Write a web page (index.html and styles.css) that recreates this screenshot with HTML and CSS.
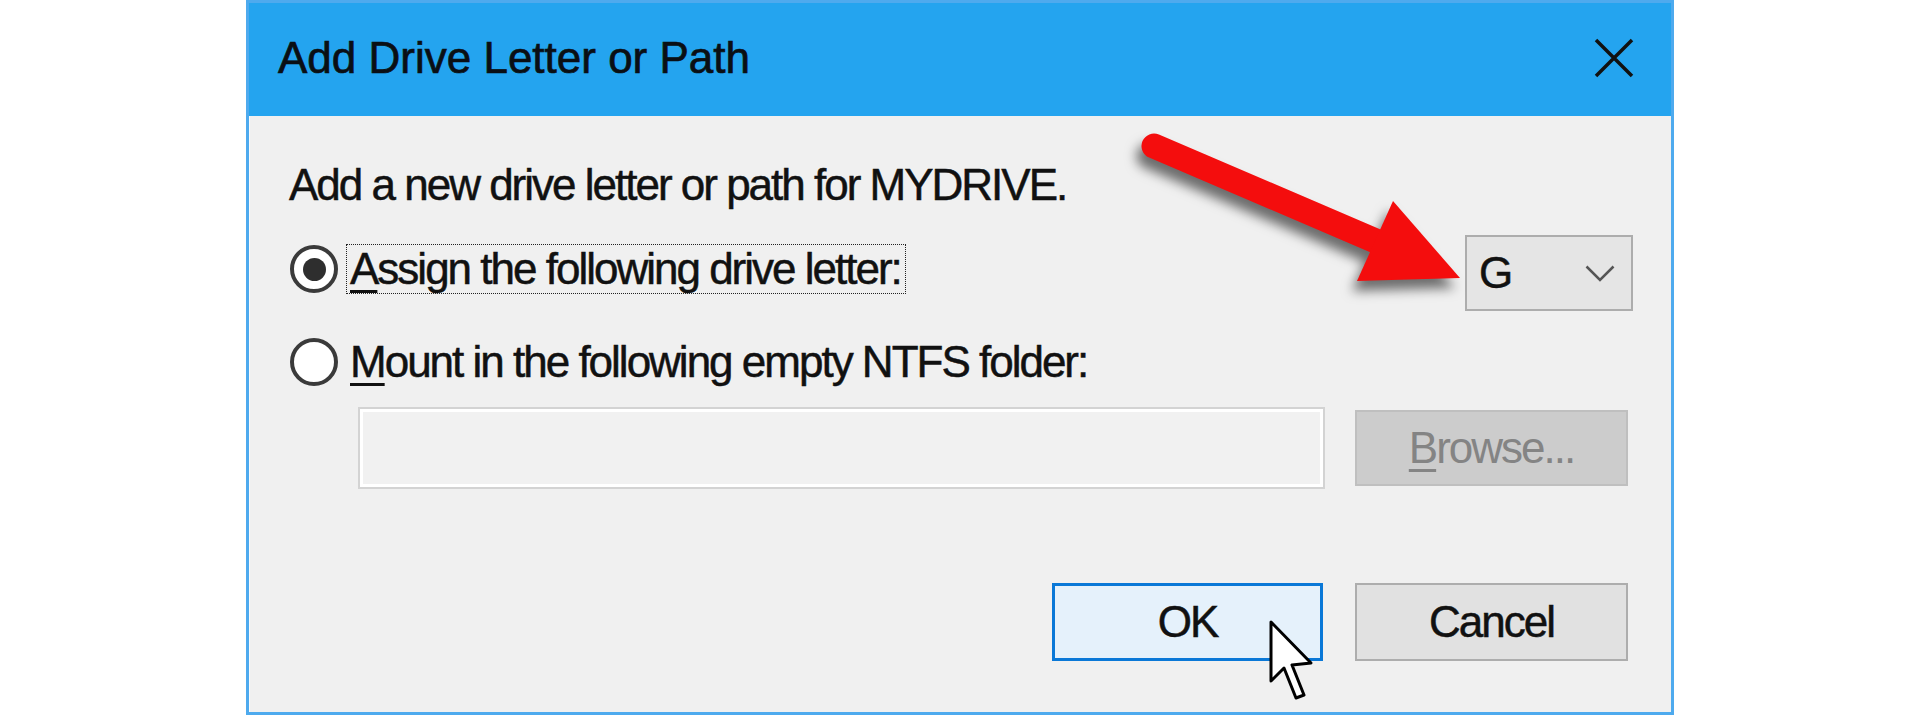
FILE: index.html
```html
<!DOCTYPE html>
<html lang="en">
<head>
  <meta charset="UTF-8">
  <meta name="viewport" content="width=device-width, initial-scale=1.0">
  <title>Add Drive Letter or Path</title>
  <link rel="stylesheet" href="styles.css">
</head>
<body>
  <div class="dialog">
    <div class="titlebar">
      <span class="title">Add Drive Letter or Path</span>
      <svg class="close" width="40" height="40" viewBox="0 0 40 40">
        <path d="M2 2 L38 38 M38 2 L2 38"></path>
      </svg>
    </div>

    <div class="content">
      <p class="intro">Add a new drive letter or path for MYDRIVE.</p>

      <div class="option-row first">
        <label class="option">
          <span class="radio checked"></span>
          <span class="option-text focused"><span class="mn">A</span>ssign the following drive letter:</span>
        </label>
        <div class="combo">
          <span>G</span>
          <svg width="30" height="17" viewBox="0 0 30 17">
            <polyline points="1.5,1.5 15,15 28.5,1.5"></polyline>
          </svg>
        </div>
      </div>

      <div class="option-row">
        <label class="option">
          <span class="radio"></span>
          <span class="option-text"><span class="mn">M</span>ount in the following empty NTFS folder:</span>
        </label>
      </div>

      <div class="path-row">
        <div class="path-field"></div>
        <button class="btn disabled"><span class="mn">B</span>rowse...</button>
      </div>

      <div class="actions">
        <button class="btn default">OK</button>
        <button class="btn">Cancel</button>
      </div>
    </div>

    <!-- annotation arrow pointing at the drive letter box -->
    <svg class="callout" width="360" height="200" viewBox="0 0 360 200">
      <line x1="31" y1="25" x2="262" y2="124"></line>
      <polygon points="337,157 234,160 270,80"></polygon>
    </svg>

    <svg class="cursor" width="46" height="84" viewBox="0 0 46 84">
      <polygon points="2,2 2,61 15,48 27,78 35,75 23,45 42,43"></polygon>
    </svg>
  </div>
</body>
</html>
```

FILE: styles.css
```css
body {
  margin: 0;
  height: 717px;
  overflow: hidden;
  background-color: #ffffff;
  font-family: 'Liberation Sans', Arial, sans-serif;
  color: #111111;
}
.dialog {
  position: relative;
  box-sizing: border-box;
  width: 1428px;
  height: 715px;
  margin: 0 auto;
  border: 3px solid #4eaaee;
  display: flex;
  flex-direction: column;
  background-color: #f0f0f0;
}
.titlebar {
  height: 113px;
  flex-shrink: 0;
  background-color: #24a4ef;
  display: flex;
  align-items: center;
  justify-content: space-between;
  padding: 0 37px 4px 29px;
  box-sizing: border-box;
}
.title {
  font-size: 44px;
  line-height: 50px;
  color: #0a0f14;
  -webkit-text-stroke: 0.7px #0a0f14;
}
.close path {
  stroke: #111111;
  stroke-width: 3.5;
  fill: none;
}
.content {
  flex: 1;
  display: flex;
  flex-direction: column;
  padding: 44px 43px 51px 40px;
  font-size: 44px;
  letter-spacing: -2px;
  -webkit-text-stroke: 0.5px currentColor;
  box-shadow: inset 1px 0 0 #fafafa;
}
.intro {
  margin: 0;
  line-height: 50px;
}
.option-row {
  display: flex;
  justify-content: space-between;
  align-items: flex-start;
  margin-top: 26px;
}
.option-row.first {
  margin-top: 21px;
}
.option-row.first .option {
  margin-top: 13px;
}
.option {
  display: flex;
  align-items: center;
}
.radio {
  width: 48px;
  height: 48px;
  box-sizing: border-box;
  border-radius: 50%;
  border: 4px solid #3a3a3a;
  background-color: #ffffff;
  margin: 0 8px 0 1px;
  display: flex;
  align-items: center;
  justify-content: center;
}
.radio.checked::after {
  content: "";
  width: 23px;
  height: 23px;
  border-radius: 50%;
  background-color: #2e2e2e;
}
.option-text {
  line-height: 48px;
  padding: 0 4px 0 3px;
  border: 1px solid transparent;
}
.option-text.focused {
  border: 1px dotted #222222;
}
.mn {
  text-decoration: underline;
  text-decoration-thickness: 3px;
  text-underline-offset: 6px;
}
.combo {
  box-sizing: border-box;
  width: 168px;
  height: 76px;
  margin: 4px -5px 0 0;
  border: 2px solid #adadad;
  background-color: #e5e5e5;
  display: flex;
  align-items: center;
  justify-content: space-between;
  padding: 0 16px 0 12px;
  letter-spacing: 0;
}
.combo polyline {
  fill: none;
  stroke: #555555;
  stroke-width: 2.5;
}
.path-row {
  display: flex;
  align-items: center;
  gap: 30px;
  margin-top: 20px;
  padding-left: 69px;
}
.path-field {
  flex: 1;
  height: 82px;
  box-sizing: border-box;
  border: 2px solid #d3d3d3;
  background-color: #f1f1f1;
  box-shadow: inset 0 0 0 3px #ffffff;
}
.btn {
  box-sizing: border-box;
  width: 273px;
  height: 78px;
  border: 2px solid #adadad;
  background-color: #e1e1e1;
  font-family: inherit;
  font-size: 44px;
  letter-spacing: -2px;
  -webkit-text-stroke: 0.5px currentColor;
  color: #111111;
  padding: 0;
}
.btn.disabled {
  height: 76px;
  border-color: #bfbfbf;
  background-color: #cccccc;
  color: #848484;
  -webkit-text-stroke: 0;
}
.btn.default {
  width: 271px;
  border: 3px solid #0a78d7;
  background-color: #e5f1fb;
}
.actions {
  margin-top: auto;
  display: flex;
  justify-content: flex-end;
  gap: 32px;
}
.callout {
  position: absolute;
  left: 874px;
  top: 118px;
  overflow: visible;
  filter: drop-shadow(-5px 10px 6px rgba(0, 0, 0, 0.55));
}
.callout line {
  stroke: #f40d0d;
  stroke-width: 25;
  stroke-linecap: round;
}
.callout polygon {
  fill: #f40d0d;
}
.cursor {
  position: absolute;
  left: 1020px;
  top: 617px;
}
.cursor polygon {
  fill: #ffffff;
  stroke: #000000;
  stroke-width: 3;
  stroke-linejoin: round;
}
```
